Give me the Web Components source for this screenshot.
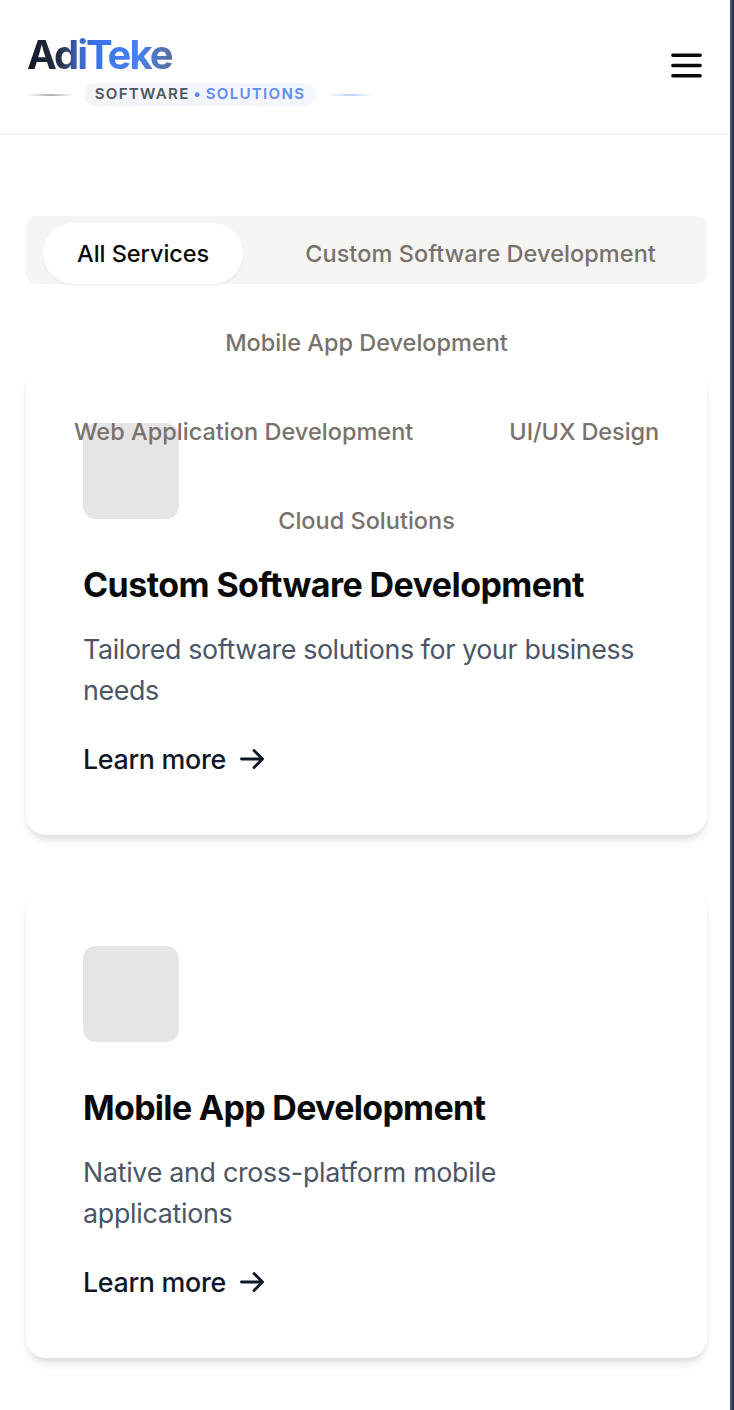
<!DOCTYPE html>
<html lang="en"><head><meta charset="utf-8"><title>AdiTeke Services</title>
<style>html,body{margin:0;height:100%;overflow:hidden}body{font-family:Inter,"Liberation Sans",sans-serif;background:#fff}</style></head>
<body><adi-app></adi-app>
<script>
const define=(name,html)=>{
  const t=document.createElement('template');t.innerHTML=html;
  customElements.define(name,class extends HTMLElement{
    constructor(){super();this.attachShadow({mode:'open'}).append(t.content.cloneNode(true));}
  });
};
define('adi-header',`<style>
:host{display:flex;box-sizing:border-box;height:135px;border-bottom:2px solid #f8f8f9;justify-content:space-between;align-items:flex-start;padding:34px 28px 0 27px;background:#fff}
.name{width:max-content;font-size:40px;line-height:42px;font-weight:700;letter-spacing:-2px;padding-right:2px;background:linear-gradient(90deg,#0f172a 0%,#263043 22%,#3f68c8 36%,#3b76ed 50%,#4880f0 75%,#596f99 100%);-webkit-background-clip:text;background-clip:text;color:transparent}
.sub{display:flex;align-items:center;margin-top:7px}
.line{width:47px;height:2px;background:linear-gradient(90deg,transparent,#b0b0b0,transparent)}
.line.b{background:linear-gradient(90deg,transparent,#b9cefb,transparent)}
.pill{box-sizing:border-box;display:flex;justify-content:center;width:232px;margin:0 11px 0 10px;height:23px;border-radius:12px;background:linear-gradient(90deg,#f3f4f6,#f3f6fd);font-size:15.1px;line-height:22px;font-weight:600;letter-spacing:1.28px;color:#505664;white-space:pre}
.pill b{font-weight:600;color:#648cf0}
.pill .sp{letter-spacing:-.2px}
svg{width:41px;height:41px;margin-top:11px;margin-right:-5px}
</style><div><div class="name">AdiTeke</div><div class="sub"><span class="line"></span><span class="pill"><span>SOFTWARE</span><b class="sp"> </b><b>•</b><b class="sp"> </b><b>SOLUTIONS</b></span><span class="line b"></span></div></div>
<svg viewBox="0 0 24 24" fill="none" stroke="#0a0a0a" stroke-width="2" stroke-linecap="round"><path d="M4 6h16M4 12h16M4 18h16"/></svg>`);
define('adi-tab',`<style>
:host{display:block;padding:0 34px;height:61px;line-height:61px;border-radius:31px;font-size:23.5px;font-weight:500;letter-spacing:var(--ls,0);color:#79716b;white-space:nowrap}
:host([active]){background:#fff;color:#0c0a09;box-shadow:0 2px 3px #0000000d}
</style><slot></slot>`);
define('adi-tabs',`<style>
:host{display:flex;box-sizing:border-box;height:68px;border-radius:10px;background:#f5f5f4;padding:7px;flex-wrap:wrap;align-content:flex-start;justify-content:center;gap:28px;position:relative;z-index:1}
</style><slot></slot>`);
define('adi-card',`<style>
:host{display:flex;flex-direction:column;align-items:flex-start;box-sizing:border-box;height:469px;padding:57px;border-radius:20px;background:#fff;box-shadow:0 7px 10px -2px #0000001a,0 3px 7px -3px #0000001a}
.icon{flex:none;width:95.5px;height:95.5px;border-radius:13px;background:#e5e5e7}
h3{margin:41.5px 0 0;font-size:34px;line-height:50px;font-weight:650;color:#0a0a0a;letter-spacing:var(--h,0);white-space:nowrap}
p{margin:19px 0 0;font-size:26.8px;line-height:41px;color:#4b5565;letter-spacing:var(--p,0);white-space:pre}
.more{display:flex;align-items:center;margin-top:28px;font-size:26.8px;line-height:41px;font-weight:500;color:#0f172a;letter-spacing:-.3px}
svg{width:26px;height:24px;margin-left:13px;margin-top:-2px}
</style><div class="icon"></div><h3><slot name="title"></slot></h3><p><slot name="desc"></slot></p><div class="more"><span>Learn more</span><svg viewBox="0 0 26 24" fill="none" stroke="#0f172a" stroke-width="2.9" stroke-linecap="round" stroke-linejoin="round"><path d="M2.5 12h21M15 3.5l8.5 8.5-8.5 8.5"/></svg></div>`);
define('adi-app',`<style>
:host{display:flex;height:1410px}
main{width:730px;flex:none}
.edge{width:2px;background:#4a566c}.edge.d{background:#2b354b}
section{padding:81px 23px 0 26px}
.cards{display:flex;flex-direction:column;gap:54px;margin-top:82px}
</style><main><adi-header></adi-header><section><adi-tabs>
<adi-tab active style="--ls:-.05px">All Services</adi-tab><adi-tab style="--ls:.06px">Custom Software Development</adi-tab><adi-tab>Mobile App Development</adi-tab><adi-tab style="--ls:.02px">Web Application Development</adi-tab><adi-tab style="--ls:-.08px">UI/UX Design</adi-tab><adi-tab>Cloud Solutions</adi-tab></adi-tabs>
<div class="cards"><adi-card style="--h:-.57px;--p:-.37px"><span slot="title">Custom Software Development</span><span slot="desc">Tailored software solutions for your business
needs</span></adi-card><adi-card style="--h:-.7px;--p:-.28px"><span slot="title">Mobile App Development</span><span slot="desc">Native and cross-platform mobile
applications</span></adi-card></div></section></main><div class="edge"></div><div class="edge d"></div>`);
</script></body></html>
